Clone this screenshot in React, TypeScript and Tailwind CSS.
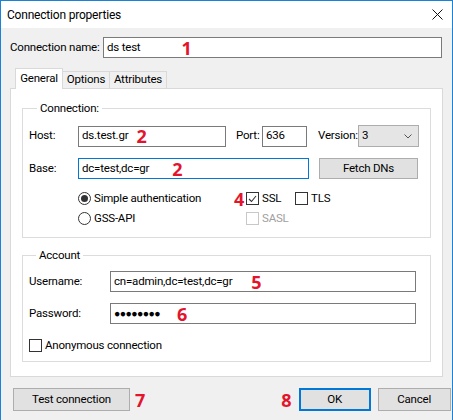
import React from 'react';

const font = { fontFamily: 'Roboto, "Noto Sans", sans-serif' };

function Num({ n, className = '' }: { n: string; className?: string }) {
  return (
    <span className={`font-['Open_Sans'] text-[18px] font-bold leading-none tracking-normal text-[#e3142c] ${className}`}>{n}</span>
  );
}

function TextBox({ value, className = '', focused = false, children }: { value: string; className?: string; focused?: boolean; children?: React.ReactNode }) {
  return (
    <div
      className={`flex h-[21px] shrink-0 items-center bg-white pl-[3px] ${focused ? 'border border-[#0078d7]' : 'border border-[#7a7a7a]'} ${className}`}
    >
      <span className="whitespace-nowrap">{value}</span>
      {children}
    </div>
  );
}

function Check({ checked = false, disabled = false, label, className = '' }: { checked?: boolean; disabled?: boolean; label: string; className?: string }) {
  return (
    <div className={`flex h-[13px] items-center gap-[3px] ${disabled ? 'text-[#a0a0a0]' : ''} ${className}`}>
      <div className={`flex h-[13px] w-[13px] shrink-0 items-center justify-center bg-white border ${disabled ? 'border-[#c8c8c8]' : 'border-[#333333]'}`}>
        {checked && (
          <svg width="9" height="8" viewBox="0 0 9 8">
            <path d="M1 4 L3.5 6.5 L8 1" fill="none" stroke="#333" strokeWidth="1.1" />
          </svg>
        )}
      </div>
      <span className="whitespace-nowrap">{label}</span>
    </div>
  );
}

function Radio({ checked = false, label }: { checked?: boolean; label: string }) {
  return (
    <div className="flex h-[13px] items-center gap-[3px]">
      <div className="flex h-[13px] w-[13px] shrink-0 items-center justify-center rounded-full border border-[#333333] bg-white">
        {checked && <div className="h-[7px] w-[7px] rounded-full bg-[#333333]" />}
      </div>
      <span className="whitespace-nowrap">{label}</span>
    </div>
  );
}

export default function App() {
  return (
    <div
      style={font}
      className="flex h-[420px] w-[453px] flex-col overflow-hidden border-x border-t border-[#1883d7] bg-[#f0f0f0] text-[11.5px] tracking-[-0.2px] text-black"
    >
      {/* Title bar */}
      <div className="flex h-[27px] shrink-0 items-center justify-between bg-white pl-[6px] pr-[9px]">
        <span className="text-[12px]">Connection properties</span>
        <svg width="11" height="11" viewBox="0 0 11 11">
          <path d="M0.5 0.5 L10.5 10.5 M10.5 0.5 L0.5 10.5" stroke="#111" strokeWidth="1" />
        </svg>
      </div>

      {/* Connection name */}
      <div className="mt-[9px] flex items-center pl-[9px]">
        <span className="w-[93px] whitespace-nowrap">Connection name:</span>
        <TextBox value="ds test" className="w-[339px]">
          <Num n="1" className="ml-[41px]" />
        </TextBox>
      </div>

      {/* Tabs */}
      <div className="mt-[10px] flex items-end pl-[14px]">
        <div className="z-10 -mb-px flex h-[21px] w-[48px] items-center justify-center border-x border-t border-[#d9d9d9] bg-white">
          General
        </div>
        <div className="flex h-[17px] w-[47px] items-center justify-center border-r border-t border-[#d9d9d9] bg-[#f0f0f0]">
          Options
        </div>
        <div className="flex h-[17px] w-[57px] items-center justify-center border-r border-t border-[#d9d9d9] bg-[#f0f0f0]">
          Attributes
        </div>
      </div>

      {/* Tab panel */}
      <div className="ml-[9px] h-[289px] w-[433px] shrink-0 border border-[#d9d9d9] bg-white px-[11px] pt-[11px]">
        <fieldset className="h-[138px] border border-[#dcdcdc] px-[6px]">
          <legend className="ml-[8px] px-[3px] leading-[16px]">Connection:</legend>

          <div className="mt-[9px] flex items-center">
            <span className="w-[49px]">Host:</span>
            <TextBox value="ds.test.gr" className="w-[148px]">
              <Num n="2" className="ml-[8px]" />
            </TextBox>
            <span className="ml-[10px] w-[26px]">Port:</span>
            <TextBox value="636" className="w-[45px]" />
            <span className="ml-[11px] w-[40px]">Version:</span>
            <div className="flex h-[22px] w-[61px] items-center justify-between border border-[#adadad] bg-[#e5e5e5] pl-[3px] pr-[6px]">
              <span>3</span>
              <svg width="8" height="5" viewBox="0 0 8 5">
                <path d="M0.5 0.5 L4 4 L7.5 0.5" fill="none" stroke="#555" strokeWidth="1" />
              </svg>
            </div>
          </div>

          <div className="mt-[11px] flex items-center">
            <span className="w-[49px]">Base:</span>
            <TextBox value="dc=test,dc=gr" focused className="w-[231px]">
              <Num n="2" className="ml-[23px]" />
            </TextBox>
            <div className="ml-[10px] flex h-[21px] w-[99px] items-center justify-center border border-[#adadad] bg-[#e1e1e1]">
              Fetch DNs
            </div>
          </div>

          <div className="mt-[13px] flex items-start pl-[49px]">
            <div className="flex w-[156px] flex-col gap-[7px]">
              <Radio checked label="Simple authentication" />
              <Radio label="GSS-API" />
            </div>
            <Num n="4" className="-mt-[2px] w-[12px]" />
            <div className="flex flex-col gap-[7px]">
              <div className="flex">
                <Check checked label="SSL" className="w-[49px]" />
                <Check label="TLS" />
              </div>
              <Check disabled label="SASL" />
            </div>
          </div>
        </fieldset>

        <fieldset className="mt-[9px] h-[115px] border border-[#dcdcdc] px-[6px]">
          <legend className="ml-[7px] px-[3px] leading-[16px]">Account</legend>

          <div className="mt-[8px] flex items-center">
            <span className="w-[81px]">Username:</span>
            <TextBox value="cn=admin,dc=test,dc=gr" className="w-[306px]">
              <Num n="5" className="ml-[19px]" />
            </TextBox>
          </div>
          <div className="mt-[11px] flex items-center">
            <span className="w-[81px]">Password:</span>
            <TextBox value="●●●●●●●●" className="w-[306px] text-[10.5px] tracking-[-0.6px]">
              <Num n="6" className="ml-[17px]" />
            </TextBox>
          </div>
          <div className="mt-[15px]">
            <Check label="Anonymous connection" />
          </div>
        </fieldset>
      </div>

      {/* Bottom buttons */}
      <div className="mt-[11px] flex items-center pl-[12px]">
        <div className="flex h-[23px] w-[117px] items-center justify-center border border-[#adadad] bg-[#e1e1e1]">
          Test connection
        </div>
        <Num n="7" className="ml-[5px]" />
        <Num n="8" className="ml-[136px]" />
        <div className="ml-[7px] flex h-[23px] w-[72px] items-center justify-center border-2 border-[#0078d7] bg-[#e1e1e1]">
          OK
        </div>
        <div className="ml-[7px] flex h-[23px] w-[73px] items-center justify-center border border-[#adadad] bg-[#e1e1e1]">
          Cancel
        </div>
      </div>
    </div>
  );
}
